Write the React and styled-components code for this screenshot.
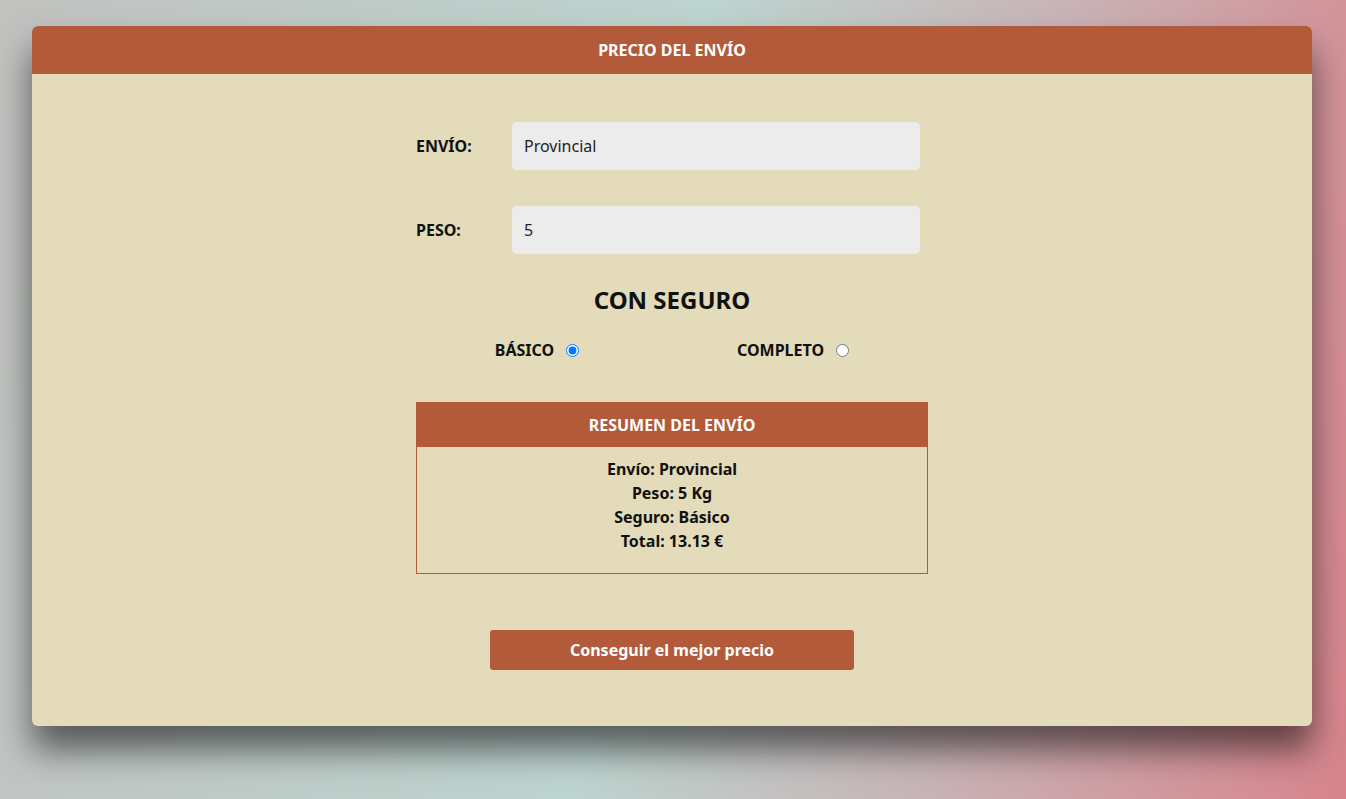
import React, { useState } from 'react';
import styled, { createGlobalStyle } from 'styled-components';

const GlobalStyle = createGlobalStyle`
  * { box-sizing: border-box; }
  html, body {
    margin: 0;
    min-height: 100%;
  }
  body {
    font-family: 'Noto Sans', 'Open Sans', sans-serif;
    min-height: 799px;
    background: linear-gradient(100deg, #c1c1bf 0%, #bdd4cf 48%, #c8b3b6 72%, #d8848c 100%);
    padding: 26px 0 0;
  }
`;

export default function App() {
  // datos del formulario
  const [envio, setEnvio] = useState('Provincial');
  const [peso, setPeso] = useState('5');
  const [seguro, setSeguro] = useState('basico');

  const total = seguro === 'basico' ? '13.13' : '15.75';

  return (
    <>
      <GlobalStyle />
      <Card>
        <CardHeader>PRECIO DEL ENVÍO</CardHeader>
        <Body>
          <Column>
            <Field>
              <Label>ENVÍO:</Label>
              <Input value={envio} onChange={e => setEnvio(e.target.value)} />
            </Field>
            <Field>
              <Label>PESO:</Label>
              <Input value={peso} onChange={e => setPeso(e.target.value)} />
            </Field>

            <Heading>CON SEGURO</Heading>
            <RadioRow>
              <RadioLabel $shift="-7px">
                BÁSICO
                <Radio
                  type="radio"
                  name="seguro"
                  checked={seguro === 'basico'}
                  onChange={() => setSeguro('basico')}
                />
              </RadioLabel>
              <RadioLabel $shift="-7px">
                COMPLETO
                <Radio
                  type="radio"
                  name="seguro"
                  checked={seguro === 'completo'}
                  onChange={() => setSeguro('completo')}
                />
              </RadioLabel>
            </RadioRow>

            <Summary>
              <SummaryHeader>RESUMEN DEL ENVÍO</SummaryHeader>
              <SummaryBody>
                <p>Envío: {envio}</p>
                <p>Peso: {peso} Kg</p>
                <p>Seguro: {seguro === 'basico' ? 'Básico' : 'Completo'}</p>
                <p>Total: {total} €</p>
              </SummaryBody>
            </Summary>
          </Column>
          <Button type="button">Conseguir el mejor precio</Button>
        </Body>
      </Card>
    </>
  );
}

const Card = styled.div`
  width: 1280px;
  margin: 0 auto 0 32px;
  background-color: #e3dbba;
  border-radius: 6px;
  box-shadow: 0 24px 34px rgba(0, 0, 0, 0.55);
  overflow: hidden;
`;

const CardHeader = styled.div`
  height: 48px;
  display: flex;
  align-items: center;
  justify-content: center;
  background-color: #b35a3a;
  color: #fff;
  font-size: 16px;
  font-weight: 700;
`;

const Body = styled.div`
  display: flex;
  flex-direction: column;
  align-items: center;
  padding: 48px 0 56px;
`;

const Column = styled.div`
  width: 512px;
  display: flex;
  flex-direction: column;
`;

const Field = styled.div`
  display: grid;
  grid-template-columns: 96px 408px;
  align-items: center;
  margin-bottom: 36px;
`;

const Label = styled.label`
  font-size: 16px;
  font-weight: 700;
  color: #111;
`;

const Input = styled.input`
  height: 48px;
  border: 0;
  border-radius: 5px;
  background-color: #ececec;
  padding: 0 12px;
  font-family: 'Noto Sans', sans-serif;
  font-size: 16px;
  color: #222;
  outline: none;
`;

const Heading = styled.h2`
  margin: -6px 0 0;
  text-align: center;
  font-size: 24px;
  line-height: 32px;
  font-weight: 700;
  color: #111;
`;

const RadioRow = styled.div`
  display: grid;
  grid-template-columns: 1fr 1fr;
  margin-top: 22px;
`;

const RadioLabel = styled.label`
  display: flex;
  align-items: center;
  justify-content: center;
  transform: translateX(${props => props.$shift});
  font-size: 16px;
  line-height: 24px;
  font-weight: 700;
  color: #111;
`;

const Radio = styled.input`
  margin: 0 0 0 12px;
  width: 13px;
  height: 13px;
`;

const Summary = styled.div`
  margin-top: 40px;
  border: 1px solid #b35a3a;
`;

const SummaryHeader = styled.div`
  height: 44px;
  display: flex;
  align-items: center;
  justify-content: center;
  background-color: #b35a3a;
  color: #fff;
  font-size: 16px;
  font-weight: 700;
`;

const SummaryBody = styled.div`
  padding: 10px 0 20px;
  text-align: center;
  font-size: 16px;
  line-height: 24px;
  font-weight: 700;
  color: #111;
  p {
    margin: 0;
  }
`;

const Button = styled.button`
  margin-top: 56px;
  width: 364px;
  height: 40px;
  border: 0;
  border-radius: 3px;
  background-color: #b35a3a;
  color: #fff;
  font-family: 'Noto Sans', sans-serif;
  font-size: 16px;
  font-weight: 700;
  cursor: pointer;
`;
